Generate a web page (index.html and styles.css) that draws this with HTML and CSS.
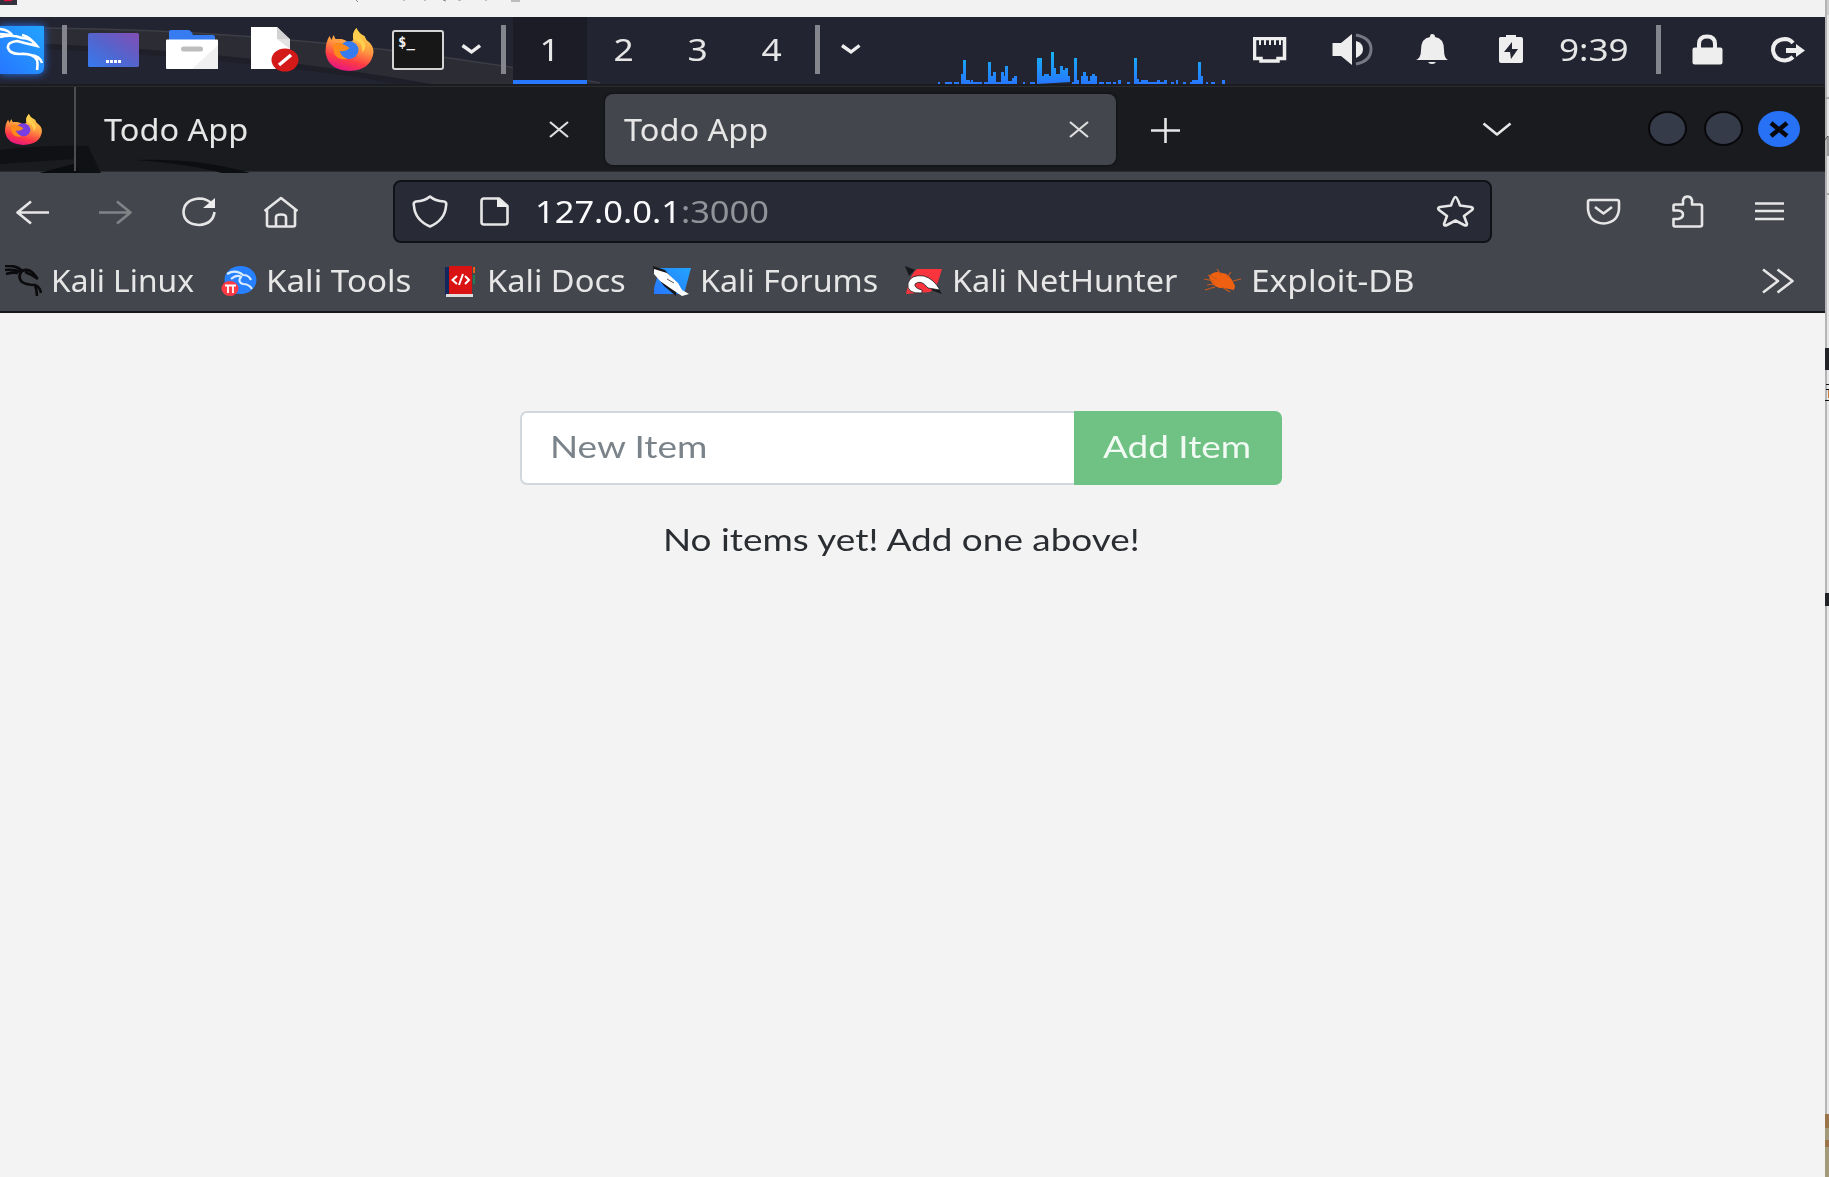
FILE: index.html
```html
<!DOCTYPE html>
<html lang="en">
<head>
<meta charset="utf-8">
<title>Todo App</title>
<link rel="stylesheet" href="styles.css">
</head>
<body>
<svg width="0" height="0" class="defs" aria-hidden="true">
  <defs>
    <linearGradient id="blue" x1="0" y1="1" x2="1" y2="0"><stop offset="0" stop-color="#2777ff"/><stop offset="1" stop-color="#22a4ff"/></linearGradient>
    <linearGradient id="desk" x1="0" y1="1" x2="1" y2="0"><stop offset="0" stop-color="#367bf0"/><stop offset=".45" stop-color="#5166cf"/><stop offset="1" stop-color="#824db4"/></linearGradient>
    <linearGradient id="fire" x1=".7" y1="0" x2=".35" y2="1"><stop offset="0" stop-color="#ffe14d"/><stop offset=".45" stop-color="#ff9640"/><stop offset=".75" stop-color="#ff3a45"/><stop offset="1" stop-color="#e31587"/></linearGradient>
    <linearGradient id="spark" gradientUnits="userSpaceOnUse" x1="0" y1="52" x2="0" y2="84"><stop offset="0" stop-color="#16b4f4"/><stop offset="1" stop-color="#2777ff"/></linearGradient>
    <symbol id="fox" viewBox="0 0 48 43">
      <path d="M4 8L6 12L8 7L10 11L16 11Q21 12 23 15L28 12Q26 5 31 0Q33 5 39 8L41 12Q48 17 48 24Q46 42 24 43Q2 42 0 24Q0 14 4 8Z" fill="url(#fire)"/>
      <ellipse cx="23.500" cy="22" rx="9.500" ry="9" class="globe"/>
      <path d="M7 17Q13 12 24 20Q20 24 14 23Q16 29 22 31Q13 33 9 26Z" fill="#ff8a1c"/>
      <path d="M28 12Q37 13 37 24Q43 18 37 12Q33 8 31 0Q26 6 28 12Z" fill="#ffd04d"/>
    </symbol>
    <symbol id="dragon" viewBox="0 0 37 32">
      <path d="M0 1Q12 0 17 6Q25 2 32 13M0 5Q9 4 15 7M1 9Q8 7 13 8M17 6Q12 12 17 17Q22 20 30 20Q35 22 36 28M30 20Q32 26 32 31M20 7Q26 9 33 14" fill="none" stroke="currentColor" stroke-width="2.600"/>
    </symbol>
  </defs>
</svg>

<div class="screen">
  <div class="desktop">
    <header class="host-strip">
      <svg viewBox="0 0 520 17" width="520" height="17"><path d="M0 0H17V5H0Z" fill="#34313f"/><path d="M4 0H13Q11 2 4 1Z" fill="#e0103c"/><path d="M356 0l2 2M404 0v1M425 0v1M443 0l3 1M458 0h3M486 0v1M511 1h13M530 0v1M548 1h3" stroke="#888" fill="none"/></svg>
    </header>

    <nav class="panel">
      <svg class="wallpaper" viewBox="0 17 620 68" width="620" height="68"><path d="M45 28Q330 31 600 84H430Q260 53 45 44Z" fill="#2c2c35"/><path d="M45 44Q260 53 430 84H400Q240 58 45 49Z" fill="#1f1f29"/><path d="M45 28Q330 31 600 83" fill="none" stroke="#3d3d45" stroke-width="1.500"/></svg>
      <svg class="kali" viewBox="0 27 45 48" width="45" height="48"><path d="M0 27H44V68Q44 75 37 75H0Z" fill="url(#blue)"/><path d="M0 30Q9 31 12 36L0 35M0 38Q12 35 22 39Q31 39 37 47Q24 44 17 42Q7 43 8 49Q10 55 20 55Q33 54 37 61Q38 65 37 71M22 36Q31 38 35 46M31 56Q40 57 42 64" fill="none" stroke="#fff" stroke-width="2.600"/></svg>
      <i class="sep"></i>
      <svg viewBox="88 33 51 34" width="51" height="34"><rect x="88" y="33" width="51" height="34" rx="1.500" fill="url(#desk)"/><path d="M106 61.500h15" stroke="#fff" stroke-width="3" stroke-dasharray="3 1"/></svg>
      <svg viewBox="166 31 52 39" width="52" height="39"><path d="M169 42V33Q169 31 171 31H188Q191 31 193 36H213Q215 36 215 38V42Z" fill="#367bf0"/><rect x="166" y="40.500" width="52" height="29.500" rx="1" fill="#fff"/><path d="M192 70L218 46V69Q218 70 217 70Z" fill="#f0f0f0"/><rect x="181" y="47.500" width="22" height="5" rx="2.500" fill="#bdbdbd"/></svg>
      <svg viewBox="251 29 48 45" width="48" height="45"><path d="M251 29H277L290 42V71H251Z" fill="#fff"/><path d="M277 29V41H290Z" fill="#d2d2d2"/><path d="M277 41H290V51Z" fill="#e3e3e3"/><ellipse cx="285" cy="62" rx="13.500" ry="11.500" fill="#d41919"/><path d="M279 67L291 57" stroke="#fff" stroke-width="3.500"/></svg>
      <svg class="fox-panel" width="49" height="43" preserveAspectRatio="none"><use href="#fox" width="49" height="43"/></svg>
      <div class="terminal"><span>$_</span></div>
      <svg viewBox="461 45 20 11" width="20" height="11"><path d="M462.500 46.500L471.500 53L480 46.500" class="heavy"/></svg>
      <i class="sep"></i>
      <div class="workspaces"><b class="on"><span class="t">1</span></b><b><span class="t">2</span></b><b><span class="t">3</span></b><b><span class="t">4</span></b></div>
      <i class="sep"></i>
      <svg viewBox="841 45 20 11" width="20" height="11"><path d="M842 46.500L851 53L859.500 46.500" class="heavy"/></svg>
      <svg class="graph" viewBox="937 51 289 33" width="289" height="33"><path fill="url(#spark)" d="M938 82h2v2h-2zM945 82h7v2h-7zM954 82h5v2h-5zM961 84v-10h2v-14h3v20h4v2h1v-2h2v2h9v2zM984 84v-2h4v-20h3v14h2v-4h3v10h5v-10h3v4h1v-10h3v15h4v-3h2v-2h3v8zM1023 82h2v2h-2zM1030 82h5v2h-5zM1037 84v-26h5v18h2v-2h5v2h2v-24h3v16h2v6h4v-8h3v4h2v-2h3v8h2v6zM1072 84v-2h2v-24h3v22h2v4zM1081 84v-8h2v-4h3v4h2v5h2v-5h2v-2h3v2h2v8zM1099 82h5v2h-5zM1106 82h5v2h-5zM1113 82h3v2h-3zM1118 80h3v4h-3zM1127 82h3v2h-3zM1134 84v-26h3v21h2v3h2v-2h7v2h9v-2h3v2h4v-2h3v4zM1171 82h3v2h-3zM1176 80h2v4h-2zM1183 82h3v2h-3zM1190 84v-2h2v-2h6v-18h3v14h2v8zM1206 82h2v2h-2zM1211 82h4v2h-4zM1222 80h3v4h-3z"/></svg>
      <svg viewBox="1253 37 34 26" width="34" height="26"><path d="M1254.500 38.500H1284.500V58.500H1278V61H1261V58.500H1254.500Z" fill="none" stroke="#eee" stroke-width="3.500"/><path d="M1260 40v5M1265 40v5M1270 40v5M1275 40v5M1280 40v5" stroke="#eee" stroke-width="2"/></svg>
      <svg viewBox="1332 34 41 33" width="41" height="33"><path d="M1332.500 44H1341L1352 35V66L1341 57H1332.500Z" fill="#eee"/><path d="M1356 42Q1363 44 1363 50Q1363 56 1356 59Z" fill="#eee"/><path d="M1356 36Q1371 39 1371 50Q1371 62 1356 65" fill="none" stroke="#777884" stroke-width="3"/></svg>
      <svg viewBox="1416 34 32 31" width="32" height="31"><path d="M1416 60Q1421 58 1421 50Q1421 38 1430 37Q1430 34 1432 34Q1435 34 1435 37Q1444 38 1444 50Q1444 58 1448 60ZM1428 62H1436Q1435 64 1432 64Q1429 64 1428 62Z" fill="#eee"/></svg>
      <svg viewBox="1499 36 24 29" width="24" height="29"><path d="M1500 38H1506V36H1516V38H1521Q1523 38 1523 40V62Q1523 64 1521 64H1501Q1499 64 1499 62V39Z" fill="#eee"/><path d="M1512 43L1504 53H1510L1511 60L1518 50H1512Z" fill="#232431"/></svg>
      <time class="clock"><span class="t">9:39</span></time>
      <i class="sep"></i>
      <svg viewBox="1692 35 31 31" width="31" height="31"><path d="M1699 50V45Q1699 37.500 1707 37.500Q1715 37.500 1715 45V50" fill="none" stroke="#eee" stroke-width="4"/><rect x="1692.500" y="48.500" width="30" height="17" rx="2" fill="#eee"/></svg>
      <svg viewBox="1770 36 36 28" width="36" height="28"><path d="M1793 43Q1790 39 1785 39Q1773 40 1773 50Q1774 60 1785 60.500Q1790 60 1793 57" fill="none" stroke="#eee" stroke-width="4"/><path d="M1786 48H1796V44L1805 50.500L1796 57V53H1786Z" fill="#eee"/></svg>
    </nav>

    <div class="tabbar">
      <svg class="wallpaper" viewBox="0 86 260 86" width="260" height="86"><path d="M0 149Q40 144 88 145L101 172H40L74 163L74 158L0 163Z" fill="#101114"/><path d="M135 159Q200 157 250 172H222Q190 163 135 159Z" fill="#0d0e11"/><path d="M40 172L74 163L80 172Z" fill="#0b0c0f"/></svg>
      <div class="pinned"><svg width="37" height="31" viewBox="0 0 48 43" preserveAspectRatio="none" class="fox-tab"><use href="#fox" width="48" height="43"/></svg></div>
      <div class="tab"><span class="t">Todo App</span><svg viewBox="0 0 20 17" width="20" height="17"><path d="M1 1L19 16M19 1L1 16" class="line"/></svg></div>
      <div class="tab active"><span class="t">Todo App</span><svg viewBox="0 0 20 17" width="20" height="17"><path d="M1 1L19 16M19 1L1 16" class="line"/></svg></div>
      <svg class="plus" viewBox="0 0 29 25" width="29" height="25"><path d="M0 12.500H29M14.500 0V25" class="line bold"/></svg>
      <svg class="alltabs" viewBox="0 0 30 15" width="30" height="15"><path d="M1.500 1.500L15 12.500L28.500 1.500" class="line bold"/></svg>
      <div class="winbtns"><i></i><i></i><i class="close"><svg viewBox="0 0 20 17" width="20" height="17"><path d="M2 2L18 15M18 2L2 15" stroke="#08080c" stroke-width="4.500"/></svg></i></div>
    </div>

    <div class="toolbar">
      <svg class="nav" viewBox="16 200 33 25" width="33" height="25"><path d="M49 212.500H17.500M31 201.500L17.500 212.500L31 223.500" class="line bold"/></svg>
      <svg class="nav dim" viewBox="99 200 33 25" width="33" height="25"><path d="M99 212.500H130.500M117 201.500L130.500 212.500L117 223.500" class="line bold"/></svg>
      <svg class="nav" viewBox="181 198 35 30" width="35" height="30"><path d="M212 205Q207 199.500 199 199.500Q184 201 183.500 213Q184 225 199 226Q213 225 214.500 213" class="line bold"/><path d="M215 199V209H203Z" fill="#eee"/></svg>
      <svg class="nav" viewBox="263 196 36 32" width="36" height="32"><path d="M264.500 211L281 198L297.500 211M267 209V225Q267 226.500 269 226.500H293Q295 226.500 295 225V209M276 226V217Q276 214.500 281 214.500Q286 214.500 286 217V226" class="line bold"/></svg>
      <div class="urlbox">
        <svg viewBox="412 195 36 33" width="36" height="33"><path d="M430 196.500Q435 201 444 201.500Q447 202 446 206Q445 220 430 226.500Q415 220 414 206Q413 202 416 201.500Q425 201 430 196.500Z" class="line bold"/></svg>
        <svg viewBox="480 197 30 29" width="30" height="29"><path d="M484 198.500H499L507.500 206V222Q507.500 224.500 505 224.500H484Q481.500 224.500 481.500 222V201Q481.500 198.500 484 198.500Z" class="line bold"/><path d="M497 198V207H508Z" fill="#eee"/></svg>
        <div class="url"><span class="t">127.0.0.1<em>:3000</em></span></div>
        <svg viewBox="1436 195 39 32" width="39" height="32"><path d="M1455.500 197Q1457 197 1460 205.500L1471 207Q1474 208 1472 210L1464 216L1467 224Q1467 226.500 1464 225L1455.500 220.500L1447 225Q1444 226.500 1444 224L1447 216L1439 210Q1437 208 1440 207L1451 205.500Q1454 197 1455.500 197Z" class="line bold"/></svg>
      </div>
      <svg viewBox="1586 198 35 27" width="35" height="27"><path d="M1590 200H1617Q1619 200 1619 202V209Q1618 222.500 1603.500 223.500Q1589 222.500 1588 209V202Q1588 200 1590 200ZM1595 207L1603.500 213.500L1612 207" class="line bold"/></svg>
      <svg viewBox="1671 195 33 33" width="33" height="33"><path d="M1673.500 206Q1673.500 204.500 1675 204.500H1683V200Q1684 196.500 1687.500 196.500Q1691 196.500 1692 200V204.500H1700Q1702 204.500 1702 206V225Q1702 226.500 1700 226.500H1675Q1673.500 226.500 1673.500 225V219H1678Q1683 218 1683 214.500Q1683 211 1678 210.500H1673.500Z" class="line bold"/></svg>
      <svg viewBox="1755 200 29 21" width="29" height="21"><path d="M1755 202.500H1784M1755 210H1784M1755 218H1784" class="line bold"/></svg>
    </div>

    <div class="bookmarks">
      <a class="linux"><svg width="37" height="32" class="black"><use href="#dragon" width="37" height="32"/></svg><span class="t">Kali Linux</span></a>
      <a class="tools"><svg viewBox="221 265 36 33" width="36" height="33"><ellipse cx="240.500" cy="281" rx="16" ry="14" fill="#2780ff"/><path d="M227 275Q236 270 243 276Q249 276 251 281M231 280Q237 275 241 278Q237 283 243 285Q249 285 252 290" fill="none" stroke="#d9ebff" stroke-width="2.200"/><ellipse cx="230" cy="289.500" rx="8.500" ry="7.500" fill="#ff3a44"/><path d="M225 286.500h11M228 287v7M233 287v7" stroke="#fff" stroke-width="1.800"/></svg><span class="t">Kali Tools</span></a>
      <a class="docs"><svg viewBox="445 265 31 32" width="31" height="32"><path d="M445 267H450V295H445Z" fill="#14275d"/><path d="M449 266H472V294H449Z" fill="#d91313"/><path d="M446 294H473V297H446Z" fill="#ddd"/><path d="M473 267H475V273H473Z" fill="#ee5b13"/><path d="M473 275H475V284H473Z" fill="#287a50"/><path d="M457 276L452.500 280L457 284M465 276L469 280L465 284M463 274L459 285" fill="none" stroke="#fff" stroke-width="2"/></svg><span class="t">Kali Docs</span></a>
      <a class="forums"><svg viewBox="653 265 38 32" width="38" height="32"><path d="M660 268H691L684 294H654V288Z" fill="url(#blue)"/><path d="M653 266L665 270L677 284L676 296L664 286L654 273Z" fill="#16171b"/><path d="M654 269L667 273L678 283L682 290L689 294L682 296L670 288L660 281L654 274Z" fill="#fff"/><path d="M667 279l7 4" stroke="#555"/></svg><span class="t">Kali Forums</span></a>
      <a class="hunter"><svg viewBox="905 267 38 29" width="38" height="29"><path d="M917 270H942L936 289L930 293L906 295Q910 275 917 270Z" fill="#f9343d"/><path d="M905 267L915 271L909 277ZM936 286L942 295L931 291Z" fill="#17181c"/><path d="M922 294Q906 295 908 284Q911 275 924 277Q934 280 940 291L928 289Q921 280 915 285Q914 289 922 291Z" fill="#fff" stroke="#1d1d22" stroke-width=".8"/></svg><span class="t">Kali NetHunter</span></a>
      <a class="exploit"><svg viewBox="1204 269 38 24" width="38" height="24"><path d="M1209 276Q1215 270 1222 273Q1230 273 1235 286L1234 290L1224 288Q1212 289 1209 276Z" fill="#ef6111"/><path d="M1204 279l10 2M1208 275l9 4M1217 269l4 6M1227 277l4-5M1233 281l8-2M1205 290q6-2 10-3M1222 287l8 5M1207 285l8-1" stroke="#c95a1c" stroke-width="1.200"/></svg><span class="t">Exploit-DB</span></a>
      <svg class="more" viewBox="1762 268 32 26" width="32" height="26"><path d="M1763 269.500L1778 281L1763 292.500M1777.500 269.500L1792.500 281L1777.500 292.500" class="line bold"/></svg>
    </div>

    <main class="page">
      <form class="group">
        <div class="field"><span class="t">New Item</span></div>
        <div class="add"><span class="t">Add Item</span></div>
      </form>
      <p class="empty"><span class="t">No items yet! Add one above!</span></p>
    </main>
  </div>

  <aside class="edge">
    <svg viewBox="1825 0 4 1177" width="4" height="1177"><path d="M1825 0h2v1177h-2z" fill="#b4b4b4"/><path d="M1827 0h2v1177h-2z" fill="#e6e6e6"/><path d="M1827 0h2v15h-2z" fill="#cecece"/><path d="M1825 98h4M1827 194h2" stroke="#aaa" stroke-width="2"/><path d="M1825 140l3-4v20" fill="none" stroke="#555"/><path d="M1825 348h4v22h-4zM1825 593h4v13h-4z" fill="#222326"/><path d="M1826 384.500h3M1826 389.500h3M1825 400.500h4" stroke="#111"/><path d="M1828 390h1v8h-1z" fill="#c98242"/><path d="M1825 1114h4v63h-4z" fill="#a29a78"/><path d="M1825 1114h4v14h-4zM1825 1140h4v7h-4z" fill="#9b7549"/></svg>
  </aside>
</div>
</body>
</html>
```
FILE: styles.css
```css
* { box-sizing: border-box; }
body { margin: 0; background: #f3f3f3; font-family: "Noto Sans", sans-serif; font-size: 30px; color: #e6e6e6; overflow: hidden; }
svg { display: block; flex: none; }
.defs { position: absolute; }
.screen { display: flex; width: 1829px; height: 1177px; }
.desktop { width: 1825px; display: flex; flex-direction: column; }
.edge { width: 4px; }

/* Type across the whole desktop is wider than its natural proportions. */
.t { display: inline-block; white-space: nowrap; line-height: 40px; transform: scaleX(var(--stretch, 1.18)); transform-origin: 0 50%; }

.line { fill: none; stroke: #dededf; stroke-width: 2.2; stroke-linejoin: round; }
.line.bold { stroke: #e6e6e7; stroke-width: 2.6; }
.heavy { fill: none; stroke: #eee; stroke-width: 3.4; }
.dim { opacity: .38; }
.black { color: #0b0b0d; }
.wallpaper { position: absolute; left: 0; top: 0; z-index: -1; }

.host-strip { height: 17px; background: #f2f2f2; }

.panel {
  position: relative; z-index: 0; height: 69px; padding-bottom: 2px;
  background: #232431; border-bottom: 2px solid #1b1c20;
  display: grid; align-items: center;
  grid-template-columns: 62px 26px 78px 85px 74px 67px 69px 40px 12px 302px 26px 96px 316px 79px 84px 83px 60px 97px 36px 78px 1fr;
}
.kali { filter: drop-shadow(0 0 4px #2777ff); }
.sep { width: 5px; height: 49px; background: #85868d; }
.fox-panel { fill: #367bf0; }
.fox-tab { fill: #793ee0; }
.terminal { width: 52px; height: 40px; border: 2.5px solid #d4d4d4; border-radius: 3px; background: #171717; }
.terminal span { display: block; padding-left: 4px; font: bold 14px/20px "DejaVu Sans Mono", monospace; color: #f4f4f4; }
.workspaces { align-self: stretch; margin-bottom: -2px; display: grid; grid-template-columns: 74px 74px 74px 74px; }
.workspaces b { font-weight: 400; display: flex; justify-content: center; align-items: center; padding-bottom: 2px; }
.workspaces .t { transform-origin: 50% 50%; }
.workspaces .on { background: #1b1c26; box-shadow: inset 0 -4px #2777ff; }
.graph { align-self: end; margin-bottom: -2px; }
.clock { --stretch: 1.17; }

.tabbar { --stretch: 1.083; position: relative; z-index: 0; height: 85px; background: #1a1b1f; border-top: 1px solid #2c2d31; display: flex; align-items: center; }
.pinned { width: 76px; height: 84px; padding-left: 5px; border-right: 2px solid #4c4d51; display: flex; align-items: center; }
.tab { width: 511px; height: 71px; padding: 0 27px 0 19px; display: flex; justify-content: space-between; align-items: center; }
.tab .t { margin-top: 1px; }
.pinned + .tab { width: 520px; margin-right: 9px; padding: 0 27px 0 28px; }
.tab.active { background: #44464d; border-radius: 8px; box-shadow: 0 0 3px #08090b; }
.plus { margin: 2px 0 0 35px; }
.alltabs { margin-left: 302px; }
.winbtns { margin-left: 136px; display: flex; gap: 17px; }
.winbtns i { width: 39px; height: 35px; border-radius: 50%; background: #353b48; border: 2px solid #08080b; }
.winbtns .close { width: 42px; height: 36px; margin-left: -2px; background: #2671f5; border: 0; display: flex; align-items: center; justify-content: center; }

.toolbar { height: 78px; padding: 1px 0 0 16px; background: #44464d; border-top: 1px solid #2b2c31; display: grid; align-items: center; grid-template-columns: 83px 82px 82px 130px 1193px 85px 84px 1fr; }
.nav { margin-top: 2px; }
.urlbox { --stretch: 1.148; width: 1099px; height: 63px; background: #282a36; border: 2px solid #111217; border-radius: 8px; display: flex; align-items: center; padding: 0 15px 0 17px; }
.urlbox svg + svg { margin-left: 32px; }
.url { flex: 1; margin-left: 25px; padding-top: 1px; color: #fbfbfe; }
.url em { font-style: normal; color: #929399; }

.bookmarks { height: 64px; background: #44464d; border-bottom: 2px solid #17181c; padding: 1px 0 0 5px; display: grid; align-items: center; grid-template-columns: 216px 224px 208px 252px 299px 558px 1fr; }
.bookmarks a { display: flex; align-items: center; gap: 9px; }
.linux { --stretch: 1.058; }
.tools { --stretch: 1.104; }
.docs { --stretch: 1.088; }
.bookmarks .docs { gap: 11px; }
.forums { --stretch: 1.075; }
.hunter { --stretch: 1.08; }
.exploit { --stretch: 1.116; }

.page { --stretch: 1.23; flex: 1; background: #f3f3f3; font-family: Lato, sans-serif; padding: 98px 0 0 520px; }
.group { margin: 0; width: 762px; height: 74px; display: flex; }
.field { width: 554px; padding: 13px 0 0 28px; background: #fff; border: 2px solid #d2d7dc; border-right: 0; border-radius: 7px 0 0 7px; color: #7b838a; }
.add { flex: 1; padding: 15px 0 0 29px; background: #6fc283; border-radius: 0 7px 7px 0; color: #f2faf4; }
.empty { margin: 34px 0 0 143px; color: #2a2e32; }
```
